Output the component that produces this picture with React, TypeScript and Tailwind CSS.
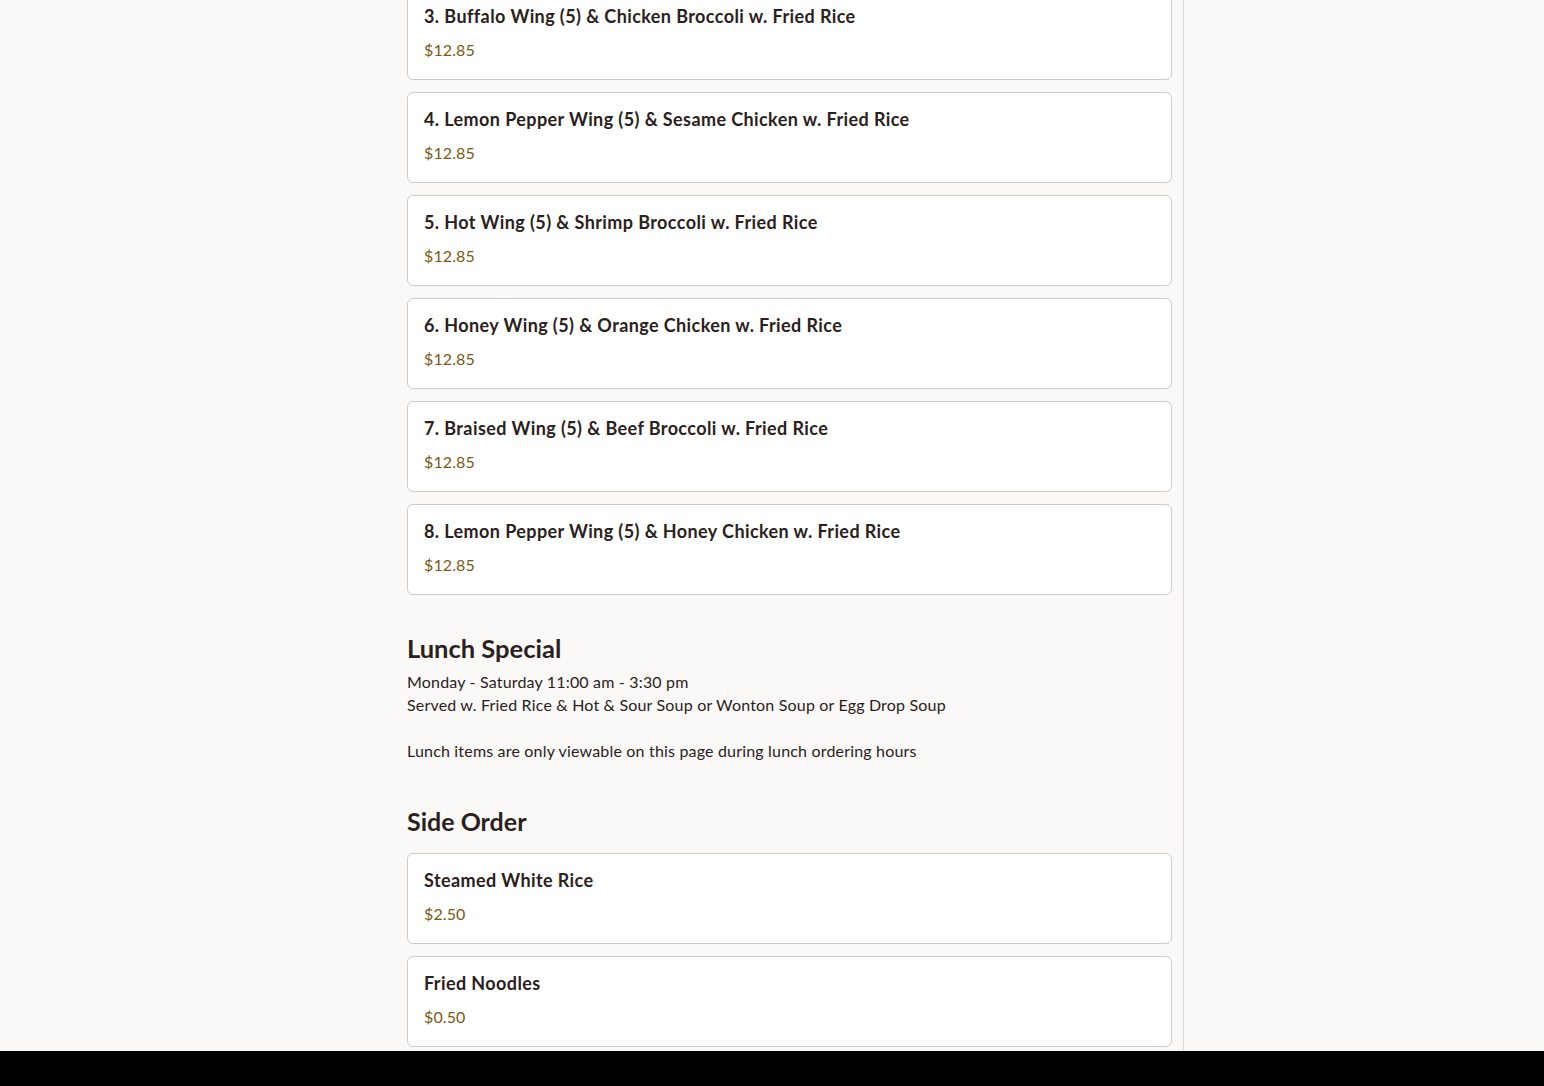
import React from "react";

const combos = [
  "3. Buffalo Wing (5) & Chicken Broccoli w. Fried Rice",
  "4. Lemon Pepper Wing (5) & Sesame Chicken w. Fried Rice",
  "5. Hot Wing (5) & Shrimp Broccoli w. Fried Rice",
  "6. Honey Wing (5) & Orange Chicken w. Fried Rice",
  "7. Braised Wing (5) & Beef Broccoli w. Fried Rice",
  "8. Lemon Pepper Wing (5) & Honey Chicken w. Fried Rice",
];

function Card({ name, price }: { name: string; price: string }) {
  return (
    <div className="bg-white border border-[#cfccc8] rounded-[6px] pl-[16px] pr-4 pt-[14px] pb-[17px] flex flex-col gap-[10px]">
      <div className="text-[18px] leading-[24px] font-bold tracking-[0.4px] text-[#2b211c]">{name}</div>
      <div className="text-[16px] leading-[24px] tracking-[0.1px] text-[#7a5a16]">{price}</div>
    </div>
  );
}

export default function App() {
  return (
    <div
      className="min-h-screen bg-[#faf9f7] flex"
      style={{ fontFamily: "Lato, 'Noto Sans', sans-serif" }}
    >
      <div className="w-[407px] shrink-0" />
      <div className="w-[777px] shrink-0 border-r border-[#dcd9d5] pr-[11px] pb-10">
        <div className="flex flex-col gap-[12px] mt-[-11px]">
          {combos.map((c) => (
            <Card key={c} name={c} price="$12.85" />
          ))}
        </div>

        <h2 className="mt-[37px] text-[25.5px] leading-[32px] font-bold text-[#2b211c]">Lunch Special</h2>
        <div className="mt-[6px] text-[16px] leading-[23px] tracking-[0.18px] text-[#2b211c]">
          <p>Monday - Saturday 11:00 am - 3:30 pm</p>
          <p>Served w. Fried Rice &amp; Hot &amp; Sour Soup or Wonton Soup or Egg Drop Soup</p>
          <p>&nbsp;</p>
          <p>Lunch items are only viewable on this page during lunch ordering hours</p>
        </div>

        <h2 className="mt-[43px] text-[25px] leading-[32px] font-bold text-[#2b211c]">Side Order</h2>
        <div className="mt-[16px] flex flex-col gap-[12px]">
          <Card name="Steamed White Rice" price="$2.50" />
          <Card name="Fried Noodles" price="$0.50" />
        </div>
      </div>
      <div className="flex-1" />
      <div className="fixed left-0 right-0 bottom-0 h-[35px] bg-black" />
    </div>
  );
}
